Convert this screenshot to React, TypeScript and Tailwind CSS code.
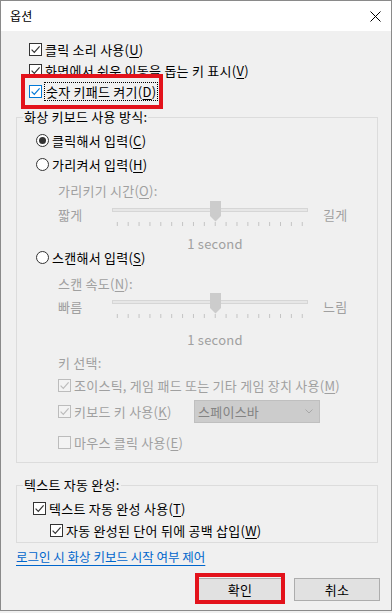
import React from 'react';
import clsx from 'clsx';

// Mnemonic letter, underlined like the Win32 access keys
const Mn: React.FC<{ c: string }> = ({ c }) => <span className="underline underline-offset-[2px]">{c}</span>;

type BoxProps = { checked?: boolean; disabled?: boolean; focused?: boolean };

const CheckBox: React.FC<BoxProps> = ({ checked, disabled, focused }) => {
  const stroke = focused ? '#0078d7' : disabled ? '#bcbcbc' : '#333333';
  return (
    <span
      className={clsx(
        'flex h-[13px] w-[13px] shrink-0 items-center justify-center border',
        focused ? 'border-[#0078d7]' : disabled ? 'border-[#bcbcbc]' : 'border-[#333333]',
        disabled ? 'bg-[#f3f3f3]' : 'bg-white'
      )}
    >
      {checked && (
        <svg width="11" height="11" viewBox="0 0 11 11">
          <path d="M1.6 5.6 L4.3 8.4 L9.6 2.4" fill="none" stroke={stroke} strokeWidth="1.2" />
        </svg>
      )}
    </span>
  );
};

const Radio: React.FC<{ checked?: boolean }> = ({ checked }) => (
  <span className="flex h-[13px] w-[13px] shrink-0 items-center justify-center rounded-full border border-[#333333] bg-white">
    {checked && <span className="h-[7px] w-[7px] rounded-full bg-[#333333]" />}
  </span>
);

const Slider: React.FC<{ left: string; right: string }> = ({ left, right }) => {
  const ticks = Array.from({ length: 18 }, (_, i) => 5.3 + i * 10.88);
  return (
    <div className="flex h-[26px] pl-[41px] text-[#a0a0a0]">
      <div className="flex w-[54px] items-center">{left}</div>
      <svg width="196" height="26" viewBox="0 0 196 26" className="shrink-0">
        <rect x="0.5" y="7.5" width="195" height="3" fill="#e7e7e7" stroke="#d6d6d6" />
        {ticks.map((x, i) => (
          <line key={i} x1={x} y1="21" x2={x} y2="25" stroke="#c4c4c4" strokeWidth="1" />
        ))}
        <polygon points="98,0 109,0 109,15 103.5,20.5 98,15" fill="#cccccc" />
      </svg>
      <div className="ml-[15px] flex items-center">{right}</div>
    </div>
  );
};

const App: React.FC = () => {
  return (
    <div className="h-[613px] w-[392px] bg-[#f0f0f0] font-['Noto_Sans_CJK_KR','Malgun_Gothic',sans-serif] text-[13px] leading-none tracking-[0.25px] text-black">
      <div className="flex h-[611px] flex-col border border-[#8a8a8a]">
        {/* Title bar */}
        <div className="flex h-[30px] shrink-0 items-center justify-between bg-white pl-[9px] pr-[10px]">
          <span className="text-[12px]">옵션</span>
          <svg width="11" height="11" viewBox="0 0 11 11">
            <path d="M0.5 0.5 L10.5 10.5 M10.5 0.5 L0.5 10.5" stroke="#000" strokeWidth="1" />
          </svg>
        </div>

        {/* Body */}
        <div className="flex-1 bg-[#f0f0f0] pt-[8px]">
          <div className="flex h-[21px] items-center gap-[3px] pl-[28px]">
            <CheckBox checked />
            <span>클릭 소리 사용(<Mn c="U" />)</span>
          </div>
          <div className="flex h-[21px] items-center gap-[3px] pl-[28px]">
            <CheckBox checked />
            <span>화면에서 쉬운 이동을 돕는 키 표시(<Mn c="V" />)</span>
          </div>
          <div className="relative flex h-[21px] items-center gap-[2px] pl-[28px]">
            <CheckBox checked focused />
            <span className="border border-dotted border-black px-[1px] py-[2px]">
              숫자 키패드 켜기(<Mn c="D" />)
            </span>
            <div className="absolute left-[20px] top-[-7px] h-[35px] w-[142px] border-4 border-[#e3121b]" />
          </div>

          {/* On-screen keyboard mode */}
          <fieldset className="ml-[15px] mt-[7px] w-[362px] border border-[#dcdcdc] pb-[10px]">
            <legend className="ml-[6px] h-[16px] px-[1px] leading-[16px]">화상 키보드 사용 방식:</legend>
            <div className="mt-[5px] flex h-[20px] items-center gap-[3px] pl-[19px]">
              <Radio checked />
              <span>클릭해서 입력(<Mn c="C" />)</span>
            </div>
            <div className="mt-[4px] flex h-[20px] items-center gap-[3px] pl-[19px]">
              <Radio />
              <span>가리켜서 입력(<Mn c="H" />)</span>
            </div>
            <div className="mt-[6px] flex h-[20px] items-center pl-[41px] text-[#a0a0a0]">
              <span>가리키기 시간(<Mn c="O" />):</span>
            </div>
            <div className="mt-[1px]">
              <Slider left="짧게" right="길게" />
            </div>
            <div className="ml-[95px] mt-[10px] h-[14px] w-[206px] text-center leading-[14px] text-[#a0a0a0]">1 second</div>
            <div className="flex h-[12px] items-center gap-[3px] pl-[19px]">
              <Radio />
              <span>스캔해서 입력(<Mn c="S" />)</span>
            </div>
            <div className="mt-[10px] flex h-[20px] items-center pl-[41px] text-[#a0a0a0]">
              <span>스캔 속도(<Mn c="N" />):</span>
            </div>
            <Slider left="빠름" right="느림" />
            <div className="ml-[95px] mt-[14px] h-[14px] w-[206px] text-center leading-[14px] text-[#a0a0a0]">1 second</div>
            <div className="mt-[5px] flex h-[20px] items-center pl-[41px] text-[#a0a0a0]">키 선택:</div>
            <div className="mt-[3px] flex h-[20px] items-center gap-[3px] pl-[41px] text-[#a0a0a0]">
              <CheckBox checked disabled />
              <span>조이스틱, 게임 패드 또는 기타 게임 장치 사용(<Mn c="M" />)</span>
            </div>
            <div className="mt-[5px] flex h-[23px] items-center pl-[41px] text-[#a0a0a0]">
              <div className="flex w-[136px] items-center gap-[3px]">
                <CheckBox checked disabled />
                <span>키보드 키 사용(<Mn c="K" />)</span>
              </div>
              <div className="flex h-[23px] w-[126px] items-center justify-between border border-[#bfbfbf] bg-[#cccccc] pl-[3px] pr-[6px] text-[#838383]">
                <span>스페이스바</span>
                <svg width="8" height="5" viewBox="0 0 8 5">
                  <path d="M0.5 0.5 L4 4 L7.5 0.5" fill="none" stroke="#a8a8a8" strokeWidth="1" />
                </svg>
              </div>
            </div>
            <div className="mt-[9px] flex h-[20px] items-center gap-[3px] pl-[41px] text-[#a0a0a0]">
              <CheckBox disabled />
              <span>마우스 클릭 사용(<Mn c="E" />)</span>
            </div>
          </fieldset>

          {/* Text prediction */}
          <fieldset className="ml-[15px] mt-[14px] w-[362px] border border-[#dcdcdc] pb-[2px]">
            <legend className="ml-[6px] h-[16px] px-[1px] leading-[16px]">텍스트 자동 완성:</legend>
            <div className="mt-[5px] flex h-[20px] items-center gap-[3px] pl-[16px]">
              <CheckBox checked />
              <span>텍스트 자동 완성 사용(<Mn c="T" />)</span>
            </div>
            <div className="mt-[2px] flex h-[20px] items-center gap-[3px] pl-[33px]">
              <CheckBox checked />
              <span>자동 완성된 단어 뒤에 공백 삽입(<Mn c="W" />)</span>
            </div>
          </fieldset>

          <div className="mt-[6px] flex h-[16px] items-center pl-[15px]">
            <span className="text-[12.5px] tracking-normal text-[#0066cc] underline underline-offset-[3px]">
              로그인 시 화상 키보드 시작 여부 제어
            </span>
          </div>

          {/* Buttons */}
          <div className="mt-[13px] flex justify-end gap-[11px] pr-[11px]">
            <div className="relative">
              <button className="flex h-[23px] w-[86px] items-center justify-center border border-[#adadad] bg-[#e1e1e1]">확인</button>
              <div className="absolute left-[-2px] top-[-5px] h-[31px] w-[90px] border-4 border-[#e3121b]" />
            </div>
            <button className="flex h-[23px] w-[86px] items-center justify-center border border-[#adadad] bg-[#e1e1e1]">취소</button>
          </div>
        </div>
      </div>
    </div>
  );
};

export default App;
